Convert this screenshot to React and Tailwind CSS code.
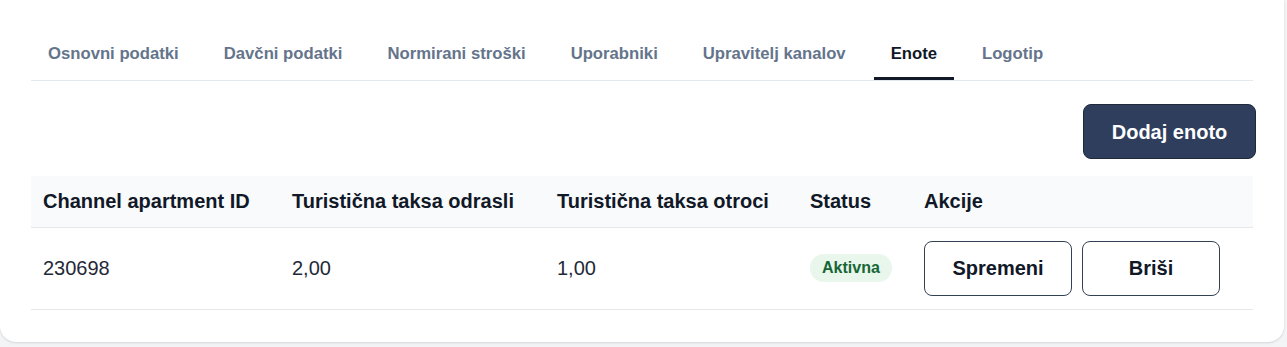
const tabs = [
  "Osnovni podatki",
  "Davčni podatki",
  "Normirani stroški",
  "Uporabniki",
  "Upravitelj kanalov",
  "Enote",
  "Logotip",
];

const columns = [
  { label: "Channel apartment ID", width: "w-[249px]" },
  { label: "Turistična taksa odrasli", width: "w-[265px]" },
  { label: "Turistična taksa otroci", width: "w-[253px]" },
  { label: "Status", width: "w-[114px]" },
  { label: "Akcije", width: "" },
];

function Tabs({ active }) {
  return (
    <div className="flex gap-[11px] border-b border-[#e2e8f0]">
      {tabs.map((t) => (
        <div
          key={t}
          className={
            "h-[50px] flex items-center px-[17px] border-b-[3px] text-[16.7px] font-bold " +
            (t === active
              ? "border-[#111827] text-[#111827]"
              : "border-transparent text-[#64748b]")
          }
        >
          {t}
        </div>
      ))}
    </div>
  );
}

function UnitsTable() {
  return (
    <table className="w-full border-collapse text-left">
      <thead>
        <tr className="bg-[#f8fafc] border-b border-[#e5e7eb]">
          {columns.map((c) => (
            <th
              key={c.label}
              className={"h-[51px] px-3 text-[20px] font-bold text-[#111827] " + c.width}
            >
              {c.label}
            </th>
          ))}
        </tr>
      </thead>
      <tbody>
        <tr className="border-b border-[#e5e7eb]">
          <td className="h-[82px] px-3 text-[20px] text-[#1f2937]">230698</td>
          <td className="px-3 text-[20px] text-[#1f2937]">2,00</td>
          <td className="px-3 text-[20px] text-[#1f2937]">1,00</td>
          <td className="px-3">
            <span className="inline-flex items-center h-[28px] px-3 rounded-full bg-[#e8f6ec] text-[16px] font-bold text-[#166534]">
              Aktivna
            </span>
          </td>
          <td className="px-3">
            <div className="flex gap-[10px]">
              <button className="w-[148px] h-[55px] rounded-lg border border-[#334155] bg-white text-[20px] font-bold text-[#111827]">
                Spremeni
              </button>
              <button className="w-[138px] h-[55px] rounded-lg border border-[#334155] bg-white text-[20px] font-bold text-[#111827]">
                Briši
              </button>
            </div>
          </td>
        </tr>
      </tbody>
    </table>
  );
}

export default function App() {
  return (
    <div
      className="w-[1287px] h-[347px] bg-[#f3f4f6] overflow-hidden"
      style={{ fontFamily: '"Liberation Sans", Arial, sans-serif' }}
    >
      <div className="w-[1284px] h-[342px] bg-white rounded-b-[16px] shadow-sm px-[31px] pt-[30px]">
        <Tabs active="Enote" />
        <div className="flex justify-end mt-[23px]">
          <button className="w-[173px] h-[55px] -mr-[3px] rounded-lg border border-[#1e293b] bg-[#2f3e5c] text-[20px] font-bold text-white">
            Dodaj enoto
          </button>
        </div>
        <div className="mt-[17px]">
          <UnitsTable />
        </div>
      </div>
    </div>
  );
}
